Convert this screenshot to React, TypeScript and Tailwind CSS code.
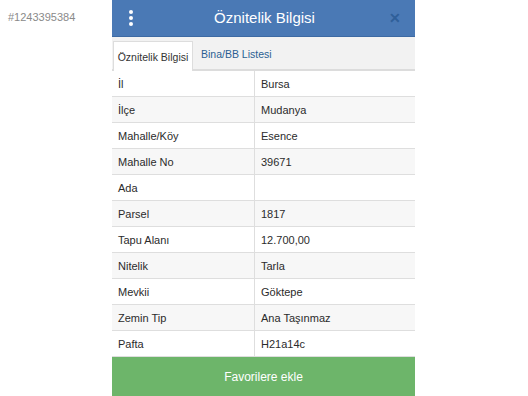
import React from "react";

const rows: [string, string][] = [
  ["İl", "Bursa"],
  ["İlçe", "Mudanya"],
  ["Mahalle/Köy", "Esence"],
  ["Mahalle No", "39671"],
  ["Ada", ""],
  ["Parsel", "1817"],
  ["Tapu Alanı", "12.700,00"],
  ["Nitelik", "Tarla"],
  ["Mevkii", "Göktepe"],
  ["Zemin Tip", "Ana Taşınmaz"],
  ["Pafta", "H21a14c"],
];

export default function App() {
  return (
    <div
      className="relative w-[528px] h-[396px] bg-white overflow-hidden"
      style={{ fontFamily: '"Liberation Sans", Arial, sans-serif' }}
    >
      <div className="absolute left-[8px] top-[9px] text-[11px] text-[#8a8a8a]">
        #1243395384
      </div>
      <div className="ml-[112px] w-[303px] h-[396px] flex flex-col">
        <div className="h-[37px] bg-[#4a79b5] flex items-center px-[14px] border-b border-[#3d6aa3]">
          <div className="w-[10px] flex flex-col items-center gap-[2px]">
            <span className="w-[4px] h-[4px] rounded-full bg-white" />
            <span className="w-[4px] h-[4px] rounded-full bg-white" />
            <span className="w-[4px] h-[4px] rounded-full bg-white" />
          </div>
          <div className="flex-1 text-center text-white text-[15px] pl-[4px]">Öznitelik Bilgisi</div>
          <div className="w-[12px] text-[#2f5f99] text-[14px] font-bold leading-none">✕</div>
        </div>
        <div className="h-[34px] bg-[#f2f2f2] border-b-[2px] border-[#dcdcdc] flex items-end px-[1px]">
          <div className="h-[30px] w-[80px] bg-white border border-b-0 border-[#dddddd] flex items-center justify-center text-[10.5px] text-[#333] -mb-[2px] pt-[2px]">
            Öznitelik Bilgisi
          </div>
          <div className="h-[30px] flex items-center px-[8px] text-[10.5px] text-[#2a5f93] pt-[2px]">Bina/BB Listesi</div>
        </div>
        <div className="flex flex-col">
          {rows.map(([k, v], i) => (
            <div
              key={k}
              className={`h-[26px] flex border-b border-[#dedede] text-[11px] text-[#2b2b2b] ${
                i % 2 === 1 ? "bg-[#f7f7f7]" : "bg-white"
              }`}
            >
              <div className="w-[143px] border-r border-[#dedede] flex items-center pl-[6px] pt-[1px]">{k}</div>
              <div className="flex-1 flex items-center pl-[6px] pt-[1px]">{v}</div>
            </div>
          ))}
        </div>
        <div className="flex-1 bg-[#6db56a] flex items-center justify-center text-white text-[12px]">
          Favorilere ekle
        </div>
      </div>
    </div>
  );
}
